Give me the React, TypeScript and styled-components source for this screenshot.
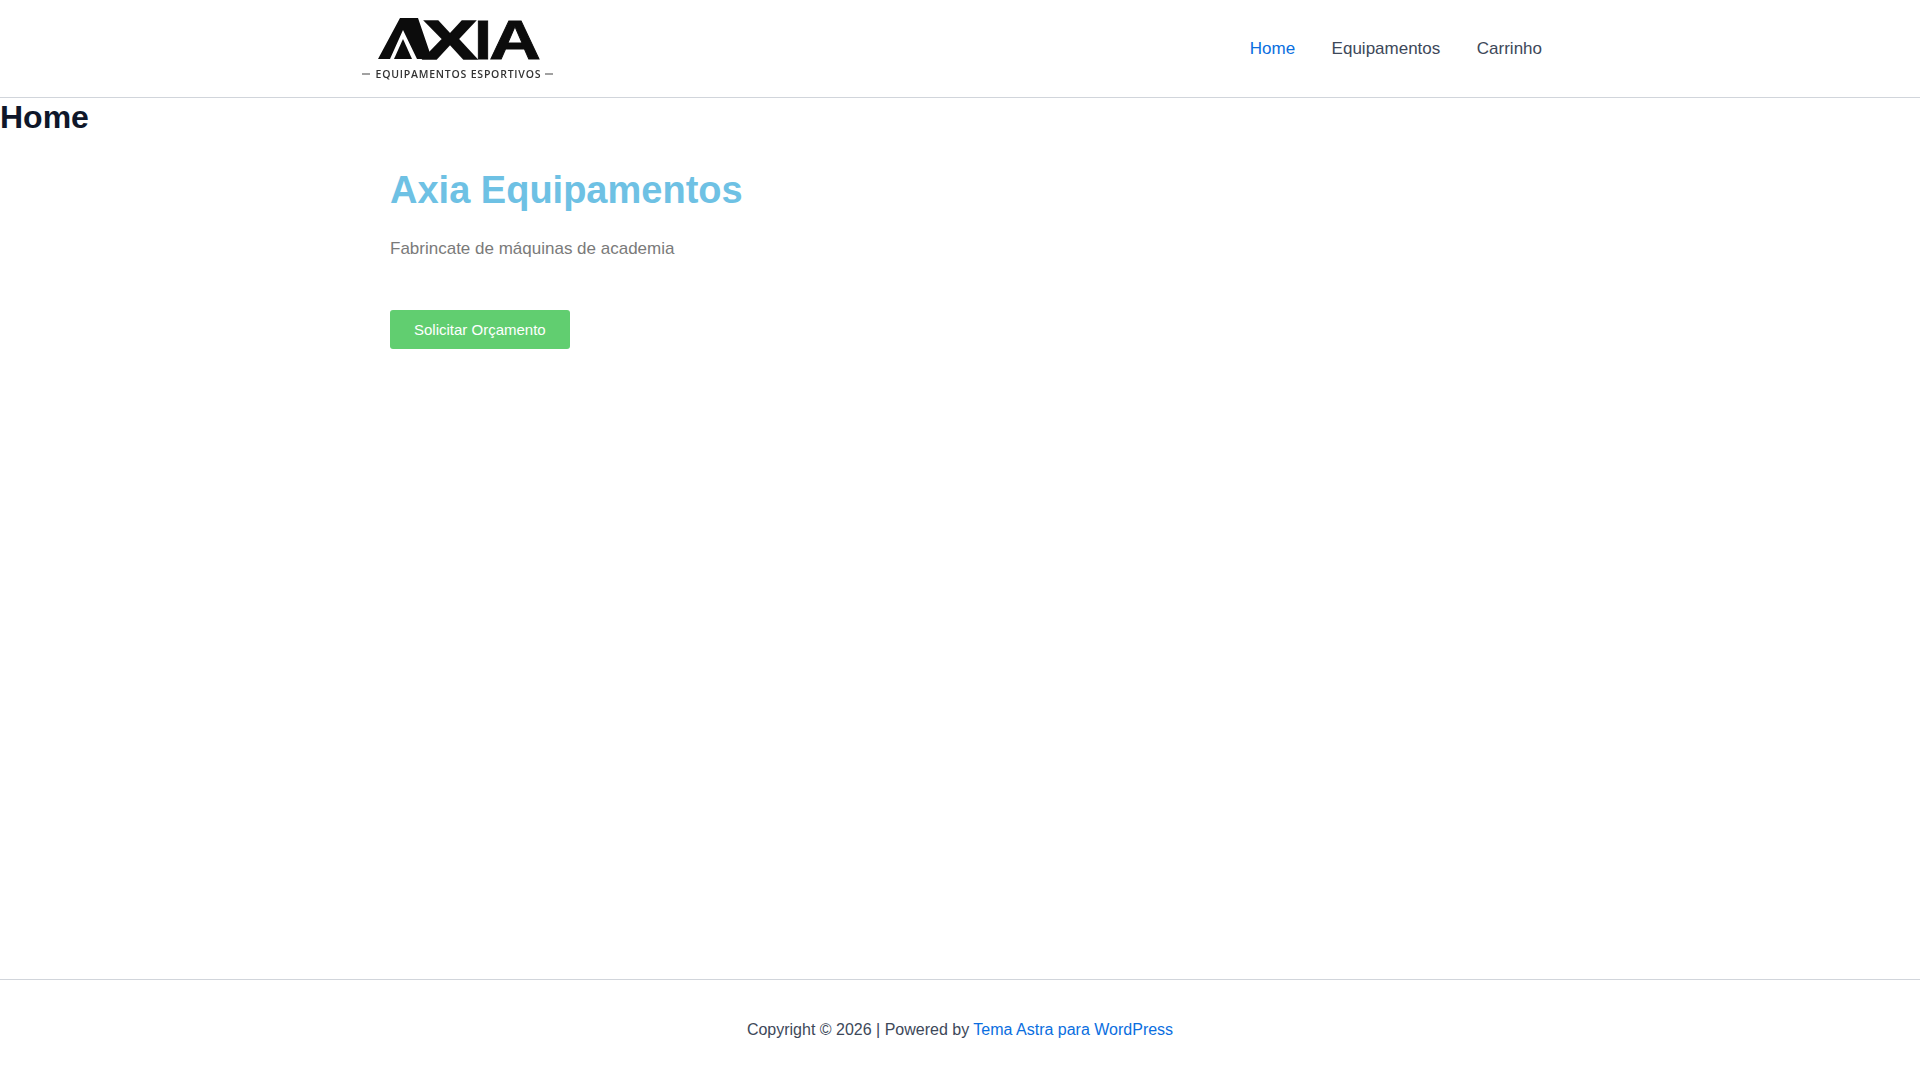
import React from "react";
import styled, { createGlobalStyle } from "styled-components";

const Global = createGlobalStyle`
  html, body { margin: 0; padding: 0; background: #fff; }
  body { font-family: "Liberation Sans", Arial, sans-serif; }
  * { box-sizing: border-box; }
`;

const Page = styled.div`
  min-height: 1080px;
  display: flex;
  flex-direction: column;
`;

const Header = styled.header`
  height: 98px;
  border-bottom: 1px solid #d1d5db;
  display: flex;
  justify-content: center;
`;

const HeaderInner = styled.div`
  width: 1200px;
  display: flex;
  align-items: center;
  justify-content: space-between;
`;

const LogoSvg = styled.svg`
  display: block;
  width: 200px;
  height: 97px;
  filter: blur(0.35px);
`;

const Nav = styled.nav`
  display: flex;
  align-items: center;
  gap: 0.5px;
`;

const NavLink = styled.a<{ $active?: boolean }>`
  padding: 0 18px;
  font-size: 17px;
  line-height: 24px;
  text-decoration: none;
  color: ${(p) => (p.$active ? "#0a6ee0" : "#3d4859")};
`;

const Main = styled.main`
  flex: 1;
`;

const PageTitle = styled.h1`
  margin: 0;
  font-size: 32px;
  line-height: 38px;
  font-weight: 700;
  color: #0f172a;
`;

const Section = styled.section`
  width: 1140px;
  margin: 0 auto;
  padding-top: 31px;
`;

const Title = styled.h2`
  margin: 0;
  font-size: 38px;
  line-height: 46px;
  font-weight: 700;
  color: #6ec1e4;
`;

const Lead = styled.p`
  margin: 23px 0 0;
  font-size: 17px;
  line-height: 26px;
  color: #7a7a7a;
`;

const Cta = styled.a`
  display: inline-block;
  margin-top: 48px;
  padding: 12px 24px;
  font-size: 15px;
  line-height: 15px;
  color: #fff;
  background: #61ce70;
  border-radius: 3px;
  text-decoration: none;
`;

const Footer = styled.footer`
  height: 101px;
  border-top: 1px solid #d1d5db;
  display: flex;
  align-items: center;
  justify-content: center;
  font-size: 16px;
  color: #3d4859;
`;

const FooterLink = styled.a`
  color: #0a6ee0;
  text-decoration: none;
`;

const markFont = "'Liberation Sans', Arial, sans-serif";

const Logo = () => (
  <LogoSvg viewBox="0 0 200 97" role="img" aria-label="Axia Equipamentos Esportivos">
    {/* stylised first A of the mark: chevron with an inner triangle */}
    <polygon points="18,59 30,59 43,30 57,59 72,59 58,18 40,18" fill="#0c0c0c" />
    <polygon points="34,59 43,39 52,59" fill="#0c0c0c" />
    <text x="63" y="58.5" fontFamily={markFont} fontWeight="700" fontSize="56" textLength="54" lengthAdjust="spacingAndGlyphs" fill="#0c0c0c" stroke="#0c0c0c" strokeWidth="1.6">X</text>
    <text x="114" y="59" fontFamily={markFont} fontWeight="700" fontSize="56" textLength="18" lengthAdjust="spacingAndGlyphs" fill="#0c0c0c" stroke="#0c0c0c" strokeWidth="0.8">I</text>
    <text x="129" y="59" fontFamily={markFont} fontWeight="700" fontSize="56" textLength="52" lengthAdjust="spacingAndGlyphs" fill="#0c0c0c" stroke="#0c0c0c" strokeWidth="0.8">A</text>
    <rect x="2" y="73.5" width="8" height="1" fill="#444" />
    <text x="15.5" y="78" fontFamily="'Open Sans', 'Liberation Sans', sans-serif" fontWeight="600" fontSize="10.5" textLength="165" fill="#333">
      EQUIPAMENTOS ESPORTIVOS
    </text>
    <rect x="185" y="73.5" width="8" height="1" fill="#444" />
  </LogoSvg>
);

export default function App() {
  return (
    <Page>
      <Global />
      <Header>
        <HeaderInner>
          <Logo />
          <Nav>
            <NavLink href="#" $active>Home</NavLink>
            <NavLink href="#">Equipamentos</NavLink>
            <NavLink href="#">Carrinho</NavLink>
          </Nav>
        </HeaderInner>
      </Header>
      <Main>
        <PageTitle>Home</PageTitle>
        <Section>
          <Title>Axia Equipamentos</Title>
          <Lead>Fabrincate de máquinas de academia</Lead>
          <Cta href="#">Solicitar Orçamento</Cta>
        </Section>
      </Main>
      <Footer>
        <span>
          Copyright © 2026 | Powered by <FooterLink href="#">Tema Astra para WordPress</FooterLink>
        </span>
      </Footer>
    </Page>
  );
}
